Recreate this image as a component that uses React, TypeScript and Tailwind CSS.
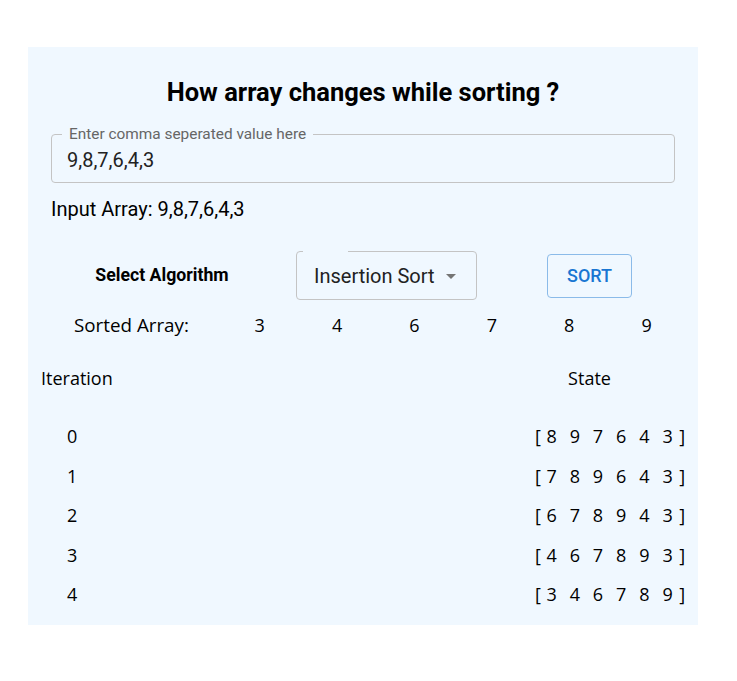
import { useState } from "react";

const steps = [
  [8, 9, 7, 6, 4, 3],
  [7, 8, 9, 6, 4, 3],
  [6, 7, 8, 9, 4, 3],
  [4, 6, 7, 8, 9, 3],
  [3, 4, 6, 7, 8, 9],
];

const sorted = [3, 4, 6, 7, 8, 9];

export default function App() {
  const [value, setValue] = useState("9,8,7,6,4,3");

  return (
    <div className="min-h-[681px] bg-white pt-[47px] pl-[28px] font-['Roboto',sans-serif]">
      <div className="h-[578px] w-[670px] bg-[#f0f8ff] text-[#000000de]">
        {/* Heading */}
        <h1 className="pt-[31px] text-center text-[25.5px] font-bold leading-[28px] text-black">
          How array changes while sorting ?
        </h1>

        {/* Text field */}
        <div className="relative mx-[23px] mt-[28px] h-[49px] rounded-[4px] border border-[#c4c4c4]">
          <span className="absolute -top-[10px] left-[10px] bg-[#f0f8ff] px-[7px] text-[15.4px] leading-[18px] text-[#666]">
            Enter comma seperated value here
          </span>
          <input
            value={value}
            onChange={(e) => setValue(e.target.value)}
            className="h-full w-full bg-transparent px-[15px] pt-[2px] text-[20px] text-[#222] outline-none"
          />
        </div>

        <p className="mt-[15px] pl-[23px] text-[20px] leading-[22px] text-black">
          Input Array: {value}
        </p>

        {/* Controls */}
        <div className="mt-[31px] flex items-center">
          <div className="w-[268px] text-center text-[17.7px] font-bold text-black">
            Select Algorithm
          </div>
          <div className="relative flex h-[49px] w-[181px] items-center rounded-[4px] border border-[#c4c4c4] pl-[17px]">
            <span className="absolute -top-[2px] left-[6px] h-[4px] w-[45px] bg-[#f0f8ff]" />
            <span className="text-[20px] text-[#222]">Insertion Sort</span>
            <svg className="ml-[10px] mt-[2px]" width="12" height="7" viewBox="0 0 12 7">
              <path d="M1 1 L6 6 L11 1 Z" fill="#757575" />
            </svg>
          </div>
          <button className="ml-[70px] h-[44px] w-[85px] rounded-[4px] border border-[#8bbbe9] text-[18px] font-medium text-[#1976d2]">
            SORT
          </button>
        </div>

        {/* Sorted array */}
        <div className="mt-[13px] flex items-center font-['Open_Sans',sans-serif] text-[18px] leading-[24px] text-black">
          <div className="w-[193px] pl-[46px] text-[18.8px]">Sorted Array:</div>
          {sorted.map((n, i) => (
            <div key={i} className="w-[77.4px] text-center">
              {n}
            </div>
          ))}
        </div>

        {/* Iterations */}
        <div className="font-['Open_Sans',sans-serif] text-[18px] leading-[24px] text-black">
          <div className="mt-[29px] flex">
            <div className="w-[500px] pl-[13px]">Iteration</div>
            <div className="w-[123px] text-center">State</div>
          </div>
          <div className="mt-[34px] flex flex-col gap-[15.5px]">
            {steps.map((s, i) => (
              <div key={i} className="flex">
                <div className="w-[507px] pl-[39px]">{i}</div>
                <div className="flex">
                  <span className="w-[5px]">[</span>
                  {s.map((n, j) => (
                    <span key={j} className="w-[23.2px] text-center">
                      {n}
                    </span>
                  ))}
                  <span>]</span>
                </div>
              </div>
            ))}
          </div>
        </div>
      </div>
    </div>
  );
}
